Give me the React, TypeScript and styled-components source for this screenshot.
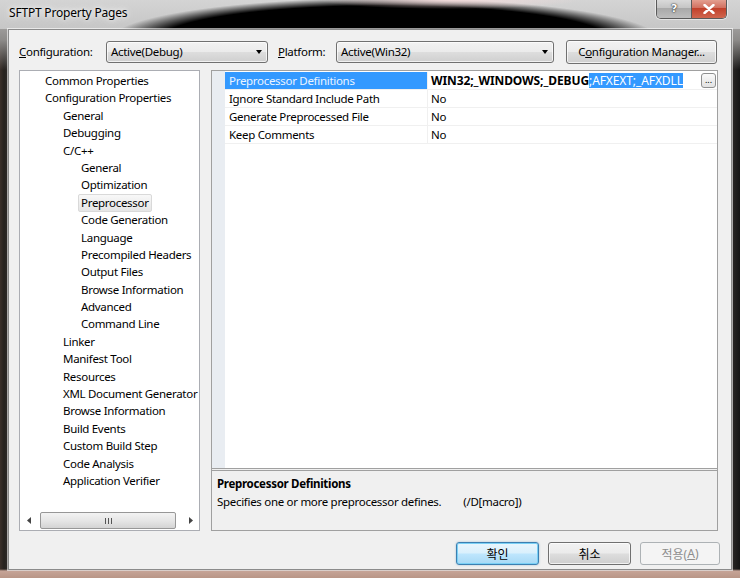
import styled, { createGlobalStyle, css } from 'styled-components';

const GlobalStyle = createGlobalStyle`
  html, body {
    margin: 0;
    padding: 0;
    background: #2b2826;
  }
  body {
    font-family: "Noto Sans", "Noto Sans CJK KR", sans-serif;
    font-size: 11.5px;
    letter-spacing: -0.3px;
    color: #000;
  }
`;

const treeItems: { label: string; level: number; selected?: boolean }[] = [
  { label: 'Common Properties', level: 0 },
  { label: 'Configuration Properties', level: 0 },
  { label: 'General', level: 1 },
  { label: 'Debugging', level: 1 },
  { label: 'C/C++', level: 1 },
  { label: 'General', level: 2 },
  { label: 'Optimization', level: 2 },
  { label: 'Preprocessor', level: 2, selected: true },
  { label: 'Code Generation', level: 2 },
  { label: 'Language', level: 2 },
  { label: 'Precompiled Headers', level: 2 },
  { label: 'Output Files', level: 2 },
  { label: 'Browse Information', level: 2 },
  { label: 'Advanced', level: 2 },
  { label: 'Command Line', level: 2 },
  { label: 'Linker', level: 1 },
  { label: 'Manifest Tool', level: 1 },
  { label: 'Resources', level: 1 },
  { label: 'XML Document Generator', level: 1 },
  { label: 'Browse Information', level: 1 },
  { label: 'Build Events', level: 1 },
  { label: 'Custom Build Step', level: 1 },
  { label: 'Code Analysis', level: 1 },
  { label: 'Application Verifier', level: 1 },
];

const properties = [
  { name: 'Ignore Standard Include Path', value: 'No' },
  { name: 'Generate Preprocessed File', value: 'No' },
  { name: 'Keep Comments', value: 'No' },
];

const App = () => {
  return (
    <>
      <GlobalStyle />
      <Window>
        <TitleBar>
          <Title>SFTPT Property Pages</Title>
          <Caption>
            <HelpButton>?</HelpButton>
            <CloseButton>
              <svg width="12" height="10" viewBox="0 0 12 10">
                <path d="M1.5 1 L10.5 9 M10.5 1 L1.5 9" stroke="#fff" strokeWidth="2.4" strokeLinecap="round" />
              </svg>
            </CloseButton>
          </Caption>
        </TitleBar>

        <Client>
          <ConfigRow>
            <FieldLabel $width={87}><u>C</u>onfiguration:</FieldLabel>
            <Combo $width={162}>
              <span>Active(Debug)</span>
              <Arrow />
            </Combo>
            <FieldLabel $width={58} $gap={10}><u>P</u>latform:</FieldLabel>
            <Combo $width={218}>
              <span>Active(Win32)</span>
              <Arrow />
            </Combo>
            <PushButton $width={151} $tall style={{ marginLeft: 12 }}>
              C<u>o</u>nfiguration Manager...
            </PushButton>
          </ConfigRow>

          <Main>
            <TreeBox>
              <TreeList>
                {treeItems.map((item, i) => (
                  <TreeItem key={i} $level={item.level}>
                    <TreeLabel $selected={item.selected}>{item.label}</TreeLabel>
                  </TreeItem>
                ))}
              </TreeList>
              <HScroll>
                <ScrollArrow>
                  <svg width="4" height="7" viewBox="0 0 4 7"><path d="M4 0 L0 3.5 L4 7 Z" fill="#444" /></svg>
                </ScrollArrow>
                <Track>
                  <Thumb>
                    <Grip />
                  </Thumb>
                </Track>
                <ScrollArrow>
                  <svg width="4" height="7" viewBox="0 0 4 7"><path d="M0 0 L4 3.5 L0 7 Z" fill="#444" /></svg>
                </ScrollArrow>
              </HScroll>
            </TreeBox>

            <PropPanel>
              <GridArea>
                <Gutter />
                <Rows>
                  <Row>
                    <NameCell $active>Preprocessor Definitions</NameCell>
                    <ValueCell $edited>
                      <Modified>WIN32;_WINDOWS;_DEBUG</Modified>
                      <Selection>;AFXEXT;_AFXDLL</Selection>
                      <EllipsisButton>...</EllipsisButton>
                    </ValueCell>
                  </Row>
                  {properties.map((p) => (
                    <Row key={p.name}>
                      <NameCell>{p.name}</NameCell>
                      <ValueCell>{p.value}</ValueCell>
                    </Row>
                  ))}
                </Rows>
              </GridArea>
              <Splitter />
              <Description>
                <DescTitle>Preprocessor Definitions</DescTitle>
                <DescText>
                  Specifies one or more preprocessor defines.<Switch>(/D[macro])</Switch>
                </DescText>
              </Description>
            </PropPanel>
          </Main>

          <ButtonRow>
            <PushButton $width={83} $default $korean>확인</PushButton>
            <PushButton $width={83} $korean>취소</PushButton>
            <PushButton $width={80} $disabled $korean>적용(<u>A</u>)</PushButton>
          </ButtonRow>
        </Client>
      </Window>
    </>
  );
};

export default App;

const Window = styled.div`
  width: 740px;
  height: 578px;
  display: flex;
  flex-direction: column;
  overflow: hidden;
  background-color: #2e2b29;
  background-image:
    linear-gradient(to bottom, rgba(198, 164, 151, 0) 569px, #c6a497 571px, #b99687 578px),
    linear-gradient(to bottom, #c4c4c4 0px, #8d8b89 40px, rgba(46, 43, 41, 0) 70px),
    linear-gradient(to right, #3b302a 0, #26221f 4px, #2e2b29 8px, #2e2b29 730px, #141414 740px);
`;

const TitleBar = styled.div`
  height: 29px;
  flex-shrink: 0;
  display: flex;
  justify-content: space-between;
  align-items: flex-start;
  padding: 0 13px 0 9px;
  background-color: #cacaca;
  background-image:
    radial-gradient(130px 9px at 450px 0px, rgba(248, 222, 222, 0.9) 0%, rgba(248, 222, 222, 0) 100%),
    radial-gradient(275px 42px at 385px 40px, #000 0%, #000 82%, rgba(0, 0, 0, 0) 100%),
    linear-gradient(to bottom, #d4d4d4 0%, #c6c6c6 100%);
`;

const Title = styled.div`
  margin-top: 5px;
  font-size: 12px;
  letter-spacing: -0.2px;
  line-height: 16px;
  color: #000;
  text-shadow: 0 0 8px rgba(255, 255, 255, 0.9), 0 0 4px rgba(255, 255, 255, 0.9);
`;

const Caption = styled.div`
  display: flex;
  margin-top: -1px;
  border: 1px solid #5a5a5a;
  border-top: none;
  border-radius: 0 0 5px 5px;
  overflow: hidden;
  box-shadow: 0 0 0 1px rgba(255, 255, 255, 0.5);
`;

const HelpButton = styled.div`
  width: 34px;
  height: 19px;
  display: flex;
  align-items: center;
  justify-content: center;
  font-family: "DejaVu Sans", sans-serif;
  font-weight: bold;
  font-size: 11px;
  color: #fff;
  text-shadow: 0 0 2px #333, 0 0 1px #000;
  border-right: 1px solid #5a5a5a;
  background: linear-gradient(to bottom, #dcdcdc 0, #c6c6c6 45%, #a9a9a9 50%, #bdbdbd 100%);
`;

const CloseButton = styled.div`
  width: 34px;
  height: 19px;
  display: flex;
  align-items: center;
  justify-content: center;
  background: linear-gradient(to bottom, #e6a596 0, #d27261 45%, #c2412b 50%, #d0664e 100%);
`;

const Client = styled.div`
  flex: 1;
  margin: 0 8px 8px 8px;
  display: flex;
  flex-direction: column;
  padding: 10px 13px 0 10px;
  background: #f0f0f0;
  border: 1px solid #8b8b8b;
  box-shadow: 0 0 0 1px rgba(255, 255, 255, 0.6);
`;

const ConfigRow = styled.div`
  height: 23px;
  display: flex;
  align-items: center;
`;

const FieldLabel = styled.div<{ $width: number; $gap?: number }>`
  width: ${(p) => p.$width}px;
  margin-left: ${(p) => p.$gap ?? 0}px;
  flex-shrink: 0;
  white-space: nowrap;
  color: #000;
`;

const win7Button = css`
  border: 1px solid #707070;
  border-radius: 3px;
  background: linear-gradient(to bottom, #f2f2f2 0, #ebebeb 48%, #dddddd 52%, #cfcfcf 100%);
  box-shadow: inset 0 0 0 1px rgba(255, 255, 255, 0.7);
`;

const Combo = styled.div<{ $width: number }>`
  ${win7Button};
  width: ${(p) => p.$width}px;
  height: 22px;
  box-sizing: border-box;
  display: flex;
  align-items: center;
  justify-content: space-between;
  padding: 0 5px 0 4px;
  flex-shrink: 0;
`;

const Arrow = styled.div`
  width: 0;
  height: 0;
  border-left: 3.5px solid transparent;
  border-right: 3.5px solid transparent;
  border-top: 4px solid #000;
`;

const PushButton = styled.div<{ $width: number; $tall?: boolean; $default?: boolean; $disabled?: boolean; $korean?: boolean }>`
  ${win7Button};
  width: ${(p) => p.$width}px;
  height: ${(p) => (p.$tall ? 24 : 23)}px;
  box-sizing: border-box;
  display: flex;
  align-items: center;
  justify-content: center;
  flex-shrink: 0;
  white-space: nowrap;
  ${(p) =>
    p.$korean &&
    css`
      font-size: 12px;
      letter-spacing: 0;
    `}
  ${(p) =>
    p.$default &&
    css`
      border-color: #3c7fb1;
      background: linear-gradient(to bottom, #eaf6fd 0, #d9f0fc 48%, #bee6fd 52%, #a7d9f5 100%);
      box-shadow: inset 0 0 0 1px #7ad0f5, 0 0 2px rgba(60, 127, 177, 0.5);
    `}
  ${(p) =>
    p.$disabled &&
    css`
      border-color: #adb2b5;
      background: #f4f4f4;
      color: #8d8d8d;
      box-shadow: none;
    `}
`;

const Main = styled.div`
  margin-top: 7px;
  height: 461px;
  display: flex;
  gap: 11px;
`;

const TreeBox = styled.div`
  width: 181px;
  box-sizing: border-box;
  border: 1px solid #abadb3;
  background: #fff;
  display: flex;
  flex-direction: column;
`;

const TreeList = styled.div`
  flex: 1;
  overflow: hidden;
  padding-top: 1px;
`;

const TreeItem = styled.div<{ $level: number }>`
  height: 17.4px;
  line-height: 17px;
  white-space: nowrap;
  padding-left: ${(p) => 22 + p.$level * 18}px;
`;

const TreeLabel = styled.span<{ $selected?: boolean }>`
  display: inline-block;
  padding: 0 2px;
  height: 16px;
  line-height: 16px;
  border: 1px solid transparent;
  border-radius: 2px;
  ${(p) =>
    p.$selected &&
    css`
      border-color: #d9d9d9;
      background: linear-gradient(to bottom, #f8f8f8, #e5e5e5);
    `}
`;

const HScroll = styled.div`
  height: 17px;
  margin-bottom: 1px;
  display: flex;
  align-items: stretch;
`;

const ScrollArrow = styled.div`
  width: 17px;
  display: flex;
  align-items: center;
  justify-content: center;
`;

const Track = styled.div`
  flex: 1;
  display: flex;
  padding: 0 3px 0 3px;
`;

const Thumb = styled.div`
  width: 136px;
  box-sizing: border-box;
  border: 1px solid #979797;
  border-radius: 2px;
  background: linear-gradient(to bottom, #f3f3f3 0, #e6e6e6 50%, #d4d4d4 100%);
  display: flex;
  align-items: center;
  justify-content: center;
`;

const Grip = styled.div`
  width: 7px;
  height: 6px;
  background: repeating-linear-gradient(to right, #555 0, #555 1px, transparent 1px, transparent 3px);
`;

const PropPanel = styled.div`
  width: 507px;
  box-sizing: border-box;
  border: 1px solid #a0a0a0;
  display: flex;
  flex-direction: column;
  background: #f0f0f0;
`;

const GridArea = styled.div`
  flex: 1;
  display: flex;
  background: #fff;
`;

const Gutter = styled.div`
  width: 13px;
  background: #e9edf2;
`;

const Rows = styled.div`
  flex: 1;
  padding-top: 1px;
`;

const Row = styled.div`
  height: 18px;
  box-sizing: border-box;
  display: flex;
  border-bottom: 1px solid #f0f0f0;
`;

const NameCell = styled.div<{ $active?: boolean }>`
  width: 203px;
  box-sizing: border-box;
  padding-left: 4px;
  line-height: 17px;
  border-right: 1px solid #f0f0f0;
  white-space: nowrap;
  ${(p) =>
    p.$active &&
    css`
      background: #3399ff;
      color: #eaf4ff;
    `}
`;

const ValueCell = styled.div<{ $edited?: boolean }>`
  flex: 1;
  padding-left: 3px;
  line-height: 17px;
  display: flex;
  align-items: center;
  white-space: nowrap;
  ${(p) =>
    p.$edited &&
    css`
      font-size: 12px;
      letter-spacing: -0.1px;
    `}
`;

const Modified = styled.span`
  font-weight: bold;
`;

const Selection = styled.span`
  background: #3399ff;
  color: #fff;
  line-height: 15px;
`;

const EllipsisButton = styled.div`
  margin-left: auto;
  margin-right: 1px;
  width: 15px;
  height: 15px;
  box-sizing: border-box;
  border: 1px solid #8e8f8f;
  border-radius: 3px;
  background: linear-gradient(to bottom, #fafafa, #e2e2e2);
  font-size: 9px;
  letter-spacing: 0;
  line-height: 9px;
  display: flex;
  align-items: flex-end;
  justify-content: center;
  padding-bottom: 3px;
`;

const Splitter = styled.div`
  height: 3px;
  border-top: 1px solid #a0a0a0;
  border-bottom: 1px solid #a0a0a0;
  box-sizing: border-box;
  background: #f0f0f0;
`;

const Description = styled.div`
  height: 55px;
  padding: 4px 5px 0;
`;

const DescTitle = styled.div`
  font-weight: bold;
  line-height: 17px;
`;

const DescText = styled.div`
  line-height: 17px;
  margin-top: 1px;
  white-space: nowrap;
`;

const Switch = styled.span`
  margin-left: 22px;
`;

const ButtonRow = styled.div`
  margin-top: 11px;
  margin-right: -2px;
  display: flex;
  justify-content: flex-end;
  gap: 9px;
`;
